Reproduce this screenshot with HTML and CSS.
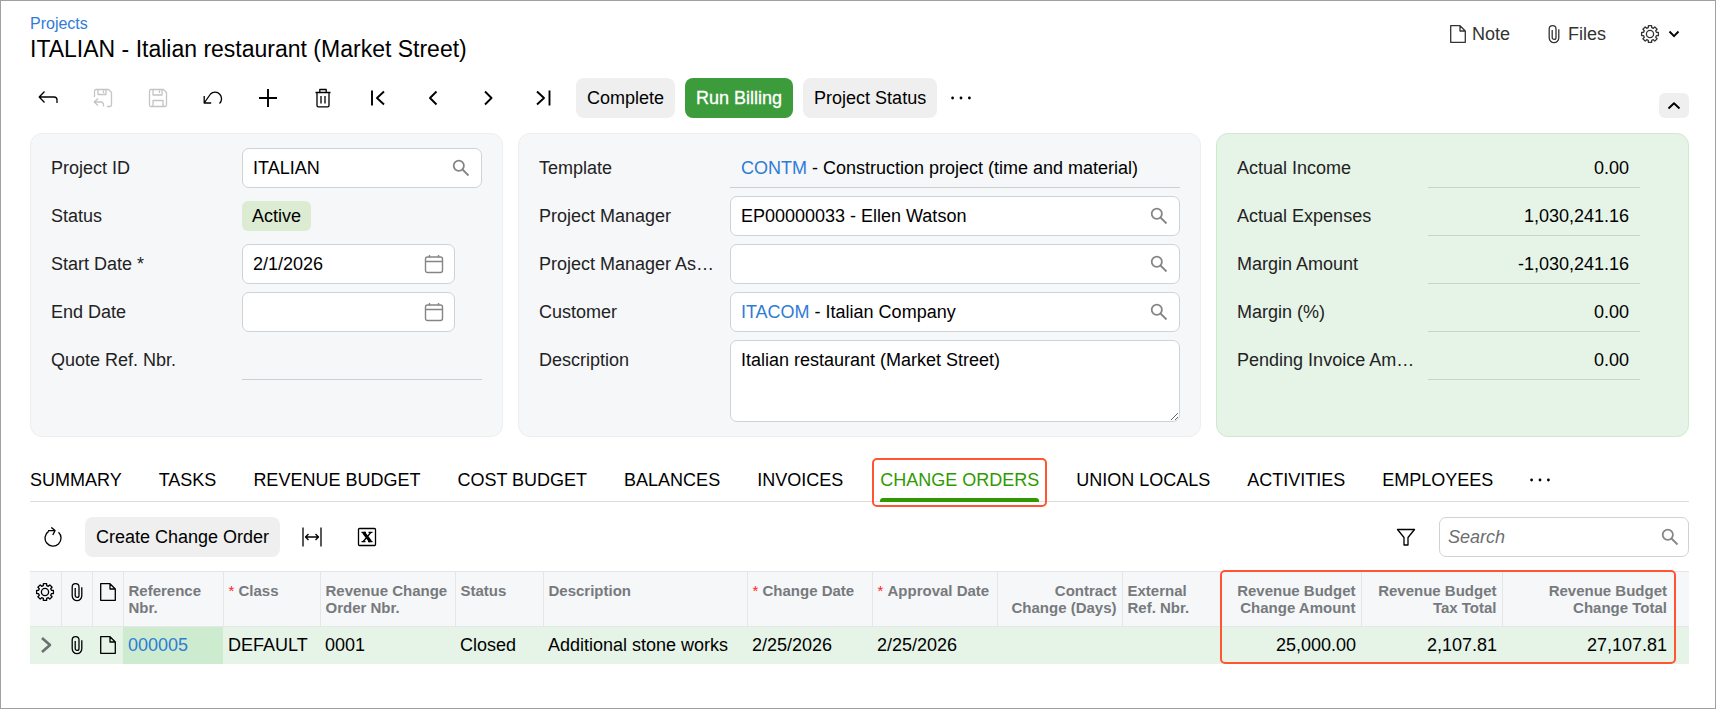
FILE: index.html
```html
<!DOCTYPE html>
<html lang="en">
<head>
    <meta charset="UTF-8">
    <meta name="viewport" content="width=device-width, initial-scale=1.0">
    <title>Projects</title>
    <link rel="stylesheet" href="styles.css">
</head>
<body>
    <svg class="sprite" aria-hidden="true">
        <symbol id="i-gear" viewBox="0 0 20 20">
            <path d="M18.4 8.4V11.6L16.4 11.7 15.7 13.3 17.1 14.8 14.8 17.1 13.3 15.7 11.7 16.4 11.6 18.4H8.4L8.3 16.4 6.7 15.7 5.2 17.1 2.9 14.8 4.3 13.3 3.6 11.7 1.6 11.6V8.4L3.6 8.3 4.3 6.7 2.9 5.2 5.2 2.9 6.7 4.3 8.3 3.6 8.4 1.6H11.6L11.7 3.6 13.3 4.3 14.8 2.9 17.1 5.2 15.7 6.7 16.4 8.3Z"/>
            <circle cx="10" cy="10" r="3.6"/>
        </symbol>
        <symbol id="i-clip" viewBox="0 0 20 20">
            <path d="M14.8 5.2V13.8a4.8 4.8 0 0 1-9.6 0V5a3.4 3.4 0 0 1 6.8 0V13.4a1.9 1.9 0 0 1-3.8 0V6"/>
        </symbol>
        <symbol id="i-note" viewBox="0 0 20 20">
            <path d="M2.7 1.7H12L17.3 7V18.3H2.7ZM12 1.7V7H17.3"/>
        </symbol>
        <symbol id="i-search" viewBox="0 0 20 20">
            <circle cx="7.8" cy="7.8" r="5.1"/>
            <path d="M11.5 11.5L17.5 17.5"/>
        </symbol>
        <symbol id="i-date" viewBox="0 0 20 20">
            <rect x="1.5" y="3" width="17" height="15.5" rx="2"/>
            <path d="M1.5 7.5H18.5M5.5 1V3.5M14.5 1V3.5"/>
        </symbol>
        <symbol id="i-dots" viewBox="0 0 20 20">
            <circle cx="1.6" cy="10" r="1.4"/>
            <circle cx="10" cy="10" r="1.4"/>
            <circle cx="18.4" cy="10" r="1.4"/>
        </symbol>
    </svg>

    <header class="page-header">
        <div>
            <a class="breadcrumb" href="#">Projects</a>
            <h1>ITALIAN - Italian restaurant (Market Street)</h1>
        </div>
        <div class="page-tools">
            <button class="tool" type="button"><svg class="icon"><use href="#i-note"/></svg>Note</button>
            <button class="tool" type="button"><svg class="icon"><use href="#i-clip"/></svg>Files</button>
            <button class="tool settings" type="button" aria-label="Settings">
                <svg class="icon"><use href="#i-gear"/></svg>
                <svg class="icon bold" viewBox="0 0 20 20"><path d="M5.5 7.5L10 12.2 14.5 7.5"/></svg>
            </button>
        </div>
    </header>

    <div class="toolbar">
        <button class="icon-btn" type="button" aria-label="Back">
            <svg class="icon dark" viewBox="0 0 20 20"><path d="M6.5 3.5L1.2 9 6.5 14.5M1.2 9H16a3 3 0 0 1 3 3V15"/></svg>
        </button>
        <button class="icon-btn" type="button" aria-label="Save and close" disabled>
            <svg class="icon" viewBox="0 0 20 20"><path d="M1.5 9V3a1.5 1.5 0 0 1 1.5-1.5H15.5L18.5 4.5V17a1.5 1.5 0 0 1-1.5 1.5H14M5 1.5V6.5H13V1.5M10.5 2.5V5M5 10.5L1.2 14 5 17.5M1.2 14H8a2.5 2.5 0 0 1 2.5 2.5V18.5"/></svg>
        </button>
        <button class="icon-btn" type="button" aria-label="Save" disabled>
            <svg class="icon" viewBox="0 0 20 20"><path d="M3 1.5H15.5L18.5 4.5V17a1.5 1.5 0 0 1-1.5 1.5H3A1.5 1.5 0 0 1 1.5 17V3A1.5 1.5 0 0 1 3 1.5ZM5 1.5V7H14V1.5M11.5 2.5V5M5 18.5V12.5H15V18.5"/></svg>
        </button>
        <button class="icon-btn" type="button" aria-label="Undo">
            <svg class="icon dark" viewBox="0 0 20 20"><path d="M1.2 8V15H8.2M1.2 15L7.5 6A6.3 6.3 0 1 1 16.5 15.5"/></svg>
        </button>
        <button class="icon-btn" type="button" aria-label="Add">
            <svg class="icon bold" viewBox="0 0 20 20"><path d="M10 1V19M1 10H19"/></svg>
        </button>
        <button class="icon-btn" type="button" aria-label="Delete">
            <svg class="icon dark" viewBox="0 0 20 20"><path d="M2.5 4.5H17.5M4 4.5V17.5a1.3 1.3 0 0 0 1.3 1.3H14.7A1.3 1.3 0 0 0 16 17.5V4.5M6.8 4V1.5H13.2V4M8 8V15.5M12 8V15.5"/></svg>
        </button>
        <button class="icon-btn" type="button" aria-label="First">
            <svg class="icon bold" viewBox="0 0 20 20"><path d="M4 2.5V17.5M16 3.5L9 10 16 16.5"/></svg>
        </button>
        <button class="icon-btn" type="button" aria-label="Previous">
            <svg class="icon bold" viewBox="0 0 20 20"><path d="M13.5 3.5L7 10 13.5 16.5"/></svg>
        </button>
        <button class="icon-btn" type="button" aria-label="Next">
            <svg class="icon bold" viewBox="0 0 20 20"><path d="M7 3.5L13.5 10 7 16.5"/></svg>
        </button>
        <button class="icon-btn" type="button" aria-label="Last">
            <svg class="icon bold" viewBox="0 0 20 20"><path d="M4 3.5L11 10 4 16.5M16.5 2.5V17.5"/></svg>
        </button>
        <div class="actions">
            <button class="btn" type="button">Complete</button>
            <button class="btn primary" type="button">Run Billing</button>
            <button class="btn" type="button">Project Status</button>
            <button class="more" type="button" aria-label="More actions"><svg class="icon fill"><use href="#i-dots"/></svg></button>
        </div>
        <button class="collapse" type="button" aria-label="Collapse">
            <svg class="icon bold" viewBox="0 0 20 20"><path d="M4.5 12.5L10 7.2 15.5 12.5"/></svg>
        </button>
    </div>

    <form class="summary">
        <section class="card">
            <label for="projectId">Project ID</label>
            <div class="field">
                <input type="text" id="projectId" value="ITALIAN">
                <svg class="icon muted"><use href="#i-search"/></svg>
            </div>
            <span class="label">Status</span>
            <span class="status">Active</span>
            <label for="startDate">Start Date *</label>
            <div class="field date">
                <input type="text" id="startDate" value="2/1/2026">
                <svg class="icon muted thin"><use href="#i-date"/></svg>
            </div>
            <label for="endDate">End Date</label>
            <div class="field date">
                <input type="text" id="endDate">
                <svg class="icon muted thin"><use href="#i-date"/></svg>
            </div>
            <span class="label">Quote Ref. Nbr.</span>
            <span class="value"></span>
        </section>

        <section class="card">
            <span class="label">Template</span>
            <span class="value"><a href="#">CONTM</a> - Construction project (time and material)</span>
            <label for="manager">Project Manager</label>
            <div class="field">
                <input type="text" id="manager" value="EP00000033 - Ellen Watson">
                <svg class="icon muted"><use href="#i-search"/></svg>
            </div>
            <label for="assistant" title="Project Manager Assistant">Project Manager As…</label>
            <div class="field">
                <input type="text" id="assistant">
                <svg class="icon muted"><use href="#i-search"/></svg>
            </div>
            <label for="customer">Customer</label>
            <div class="field">
                <a href="#">ITACOM</a>
                <input type="text" id="customer" value="- Italian Company">
                <svg class="icon muted"><use href="#i-search"/></svg>
            </div>
            <label for="description">Description</label>
            <textarea id="description">Italian restaurant (Market Street)</textarea>
        </section>

        <section class="card totals">
            <span class="label">Actual Income</span>
            <span class="value">0.00</span>
            <span class="label">Actual Expenses</span>
            <span class="value">1,030,241.16</span>
            <span class="label">Margin Amount</span>
            <span class="value">-1,030,241.16</span>
            <span class="label">Margin (%)</span>
            <span class="value">0.00</span>
            <span class="label" title="Pending Invoice Amount">Pending Invoice Am…</span>
            <span class="value">0.00</span>
        </section>
    </form>

    <nav class="tabs">
        <a href="#">SUMMARY</a>
        <a href="#">TASKS</a>
        <a href="#">REVENUE BUDGET</a>
        <a href="#">COST BUDGET</a>
        <a href="#">BALANCES</a>
        <a href="#">INVOICES</a>
        <a class="active" href="#">CHANGE ORDERS</a>
        <a href="#">UNION LOCALS</a>
        <a href="#">ACTIVITIES</a>
        <a href="#">EMPLOYEES</a>
        <button class="more" type="button" aria-label="More tabs"><svg class="icon fill"><use href="#i-dots"/></svg></button>
    </nav>

    <div class="grid-toolbar">
        <button class="icon-btn" type="button" aria-label="Refresh">
            <svg class="icon dark" viewBox="0 0 20 20"><path d="M5.6 4.4A8 8 0 1 0 15.5 5.2M5 3.6H12M8.3 .4L12 3.6 9.8 8"/></svg>
        </button>
        <button class="btn" type="button">Create Change Order</button>
        <button class="icon-btn" type="button" aria-label="Fit columns">
            <svg class="icon dark" viewBox="0 0 20 20"><path d="M1 .5V19.5M19 .5V19.5M3.5 10H16.5M6.5 7L3.5 10 6.5 13M13.5 7L16.5 10 13.5 13"/></svg>
        </button>
        <button class="icon-btn" type="button" aria-label="Export to Excel">
            <svg class="icon dark" viewBox="0 0 20 20"><rect x="1.5" y="1.5" width="17" height="17" rx="1"/><path d="M6.5 5.5L13.5 14.5" stroke-width="3"/><path d="M13.8 5.5L6.2 14.5M4.5 5.3H9M11.5 5.3H15.5M4.5 14.7H8.5M11 14.7H15.5"/></svg>
        </button>
        <button class="icon-btn filter" type="button" aria-label="Filter">
            <svg class="icon dark" viewBox="0 0 20 20"><path d="M1.5 2.5H18.5L12 10.5V18H8V10.5Z"/></svg>
        </button>
        <div class="field search">
            <input type="search" placeholder="Search" aria-label="Search">
            <svg class="icon muted"><use href="#i-search"/></svg>
        </div>
    </div>

    <div class="grid">
        <table>
            <colgroup>
                <col class="w-icon"><col class="w-icon"><col class="w-icon">
                <col class="w-ref"><col class="w-class"><col class="w-rev"><col class="w-status"><col class="w-desc">
                <col class="w-date"><col class="w-date"><col class="w-date"><col class="w-ext">
                <col class="w-amount"><col class="w-amount"><col class="w-total"><col>
            </colgroup>
            <thead>
                <tr>
                    <th class="center"><svg class="icon dark"><use href="#i-gear"/></svg></th>
                    <th class="center"><svg class="icon dark"><use href="#i-clip"/></svg></th>
                    <th class="center"><svg class="icon dark"><use href="#i-note"/></svg></th>
                    <th>Reference Nbr.</th>
                    <th class="required">Class</th>
                    <th>Revenue Change Order Nbr.</th>
                    <th>Status</th>
                    <th>Description</th>
                    <th class="required">Change Date</th>
                    <th class="required">Approval Date</th>
                    <th class="num">Contract Change (Days)</th>
                    <th>External<br>Ref. Nbr.</th>
                    <th class="num">Revenue Budget Change Amount</th>
                    <th class="num">Revenue Budget<br>Tax Total</th>
                    <th class="num">Revenue Budget<br>Change Total</th>
                    <th></th>
                </tr>
            </thead>
            <tbody>
                <tr>
                    <td class="center"><svg class="icon arrow" viewBox="0 0 20 20"><path d="M6 3L14 10 6 17"/></svg></td>
                    <td class="center"><svg class="icon dark"><use href="#i-clip"/></svg></td>
                    <td class="center"><svg class="icon dark"><use href="#i-note"/></svg></td>
                    <td class="selected"><a href="#">000005</a></td>
                    <td>DEFAULT</td>
                    <td>0001</td>
                    <td>Closed</td>
                    <td>Additional stone works</td>
                    <td>2/25/2026</td>
                    <td>2/25/2026</td>
                    <td></td>
                    <td></td>
                    <td class="num">25,000.00</td>
                    <td class="num">2,107.81</td>
                    <td class="num">27,107.81</td>
                    <td></td>
                </tr>
            </tbody>
        </table>
        <div class="highlight"></div>
    </div>
</body>
</html>
```
FILE: styles.css
```css
* {
    box-sizing: border-box;
}
html {
    height: 100%;
}
body {
    margin: 0;
    min-height: 100%;
    padding: 13px 26px 40px 29px;
    border: 1px solid #a0a0a0;
    background-color: #fff;
    color: #000;
    font-family: "Liberation Sans", Arial, sans-serif;
    font-size: 18px;
    line-height: 20px;
}
a {
    color: #2f7cd6;
    text-decoration: none;
}
button, input, textarea {
    font: inherit;
    color: inherit;
}
button {
    padding: 0;
    border: none;
    background: none;
    cursor: pointer;
}

/* icons */
.sprite {
    position: absolute;
    width: 0;
    height: 0;
}
.icon {
    display: block;
    flex: none;
    width: 20px;
    height: 20px;
    fill: none;
    stroke: #333;
    stroke-width: 1.3;
    stroke-linejoin: round;
}
.icon.dark {
    stroke: #000;
}
.icon.bold {
    stroke: #000;
    stroke-width: 1.9;
}
.icon.muted {
    stroke: #858585;
    stroke-width: 1.8;
}
.icon.thin {
    stroke-width: 1.4;
}
.icon.fill {
    fill: #000;
    stroke: none;
}
.icon.arrow {
    stroke: #6b6f72;
    stroke-width: 2.6;
}

/* header */
.page-header {
    display: flex;
    justify-content: space-between;
}
.breadcrumb {
    display: block;
    font-size: 16px;
    line-height: 20px;
}
h1 {
    margin: 0;
    font-size: 23px;
    font-weight: normal;
    line-height: 30px;
}
.page-tools {
    display: flex;
    align-items: flex-start;
    gap: 34px;
    padding: 10px 5px 0 0;
}
.tool {
    display: flex;
    align-items: center;
    gap: 4px;
    color: #333;
}

/* toolbar */
.toolbar {
    display: flex;
    align-items: center;
    margin-top: 14px;
    padding-left: 8px;
}
.icon-btn {
    display: flex;
    justify-content: center;
    width: 20px;
    margin-right: 35px;
}
.icon-btn:disabled .icon {
    stroke: #c4c4c4;
}
.actions {
    display: flex;
    align-items: center;
    gap: 10px;
    margin-left: -12px;
}
.btn {
    height: 40px;
    padding: 0 11px;
    border-radius: 8px;
    background-color: #efefef;
    white-space: nowrap;
}
.btn.primary {
    background-color: #3c9c3b;
    color: #fff;
    -webkit-text-stroke: 0.3px #fff;
}
.actions .more {
    margin-left: 4px;
}
.collapse {
    align-self: flex-end;
    width: 30px;
    height: 25px;
    margin-left: auto;
    padding: 0 5px;
    border-radius: 6px;
    background-color: #efefef;
}

/* summary cards */
.summary {
    display: grid;
    grid-template-columns: minmax(0, 9fr) minmax(0, 13fr) minmax(0, 9fr);
    gap: 15px;
    margin-top: 15px;
}
.card {
    display: grid;
    grid-template-columns: 179px minmax(0, 1fr);
    grid-auto-rows: minmax(40px, auto);
    align-content: start;
    gap: 8px 12px;
    padding: 14px 20px;
    border: 1px solid #eceef0;
    border-radius: 12px;
    background-color: #f5f7f9;
}
.card label, .card .label {
    color: #222;
    line-height: 40px;
    white-space: nowrap;
}
.card.totals {
    padding-right: 48px;
    border-color: #cdeacf;
    background-color: #e5f4e7;
}
.field {
    display: flex;
    align-items: center;
    height: 40px;
    padding: 0 10px;
    border: 1px solid #d0d3d6;
    border-radius: 7px;
    background-color: #fff;
}
.field input {
    flex: 1;
    min-width: 0;
    padding: 0;
    border: none;
    outline: none;
    background: none;
}
.field a + input {
    margin-left: 5px;
}
.field.date {
    margin-right: 27px;
}
.status {
    align-self: center;
    justify-self: start;
    padding: 5px 10px;
    border-radius: 6px;
    background-color: #dcecd2;
}
.value {
    height: 40px;
    padding: 0 11px;
    border-bottom: 1px solid #ccd0d4;
    line-height: 40px;
    white-space: nowrap;
}
.totals .value {
    border-color: #c5d3c8;
    text-align: right;
}
textarea {
    display: block;
    width: 100%;
    height: 82px;
    padding: 9px 10px;
    border: 1px solid #d0d3d6;
    border-radius: 7px;
    background-color: #fff;
    resize: vertical;
}

/* tabs */
.tabs {
    display: flex;
    gap: 37px;
    margin-top: 22px;
    border-bottom: 1px solid #dedede;
}
.tabs a {
    position: relative;
    padding: 11px 0;
    color: #000;
    white-space: nowrap;
}
.tabs a.active {
    color: #2f9a00;
}
.tabs a.active::after {
    content: "";
    position: absolute;
    right: 0;
    bottom: -1px;
    left: 0;
    height: 4px;
    border-radius: 3px 3px 0 0;
    background-color: #2f9a00;
}
.tabs a.active::before {
    content: "";
    position: absolute;
    inset: -1px -8px -6px;
    border: 2px solid #ff5533;
    border-radius: 5px;
}
.tabs .more {
    align-self: center;
}

/* grid */
.grid-toolbar {
    display: flex;
    align-items: center;
    margin: 15px 0 14px;
    padding-left: 13px;
}
.grid-toolbar .btn {
    margin: 0 22px 0 -13px;
}
.grid-toolbar .filter {
    margin-right: 23px;
    margin-left: auto;
}
.search {
    width: 250px;
    padding: 0 8px;
}
.search input::placeholder {
    color: #6e6e6e;
    font-style: italic;
}
.grid {
    position: relative;
}
table {
    width: 100%;
    border-collapse: collapse;
    table-layout: fixed;
}
.w-icon { width: 31px; }
.w-ref { width: 100px; }
.w-class { width: 97px; }
.w-rev { width: 135px; }
.w-status { width: 88px; }
.w-desc { width: 204px; }
.w-date { width: 125px; }
.w-ext { width: 98px; }
.w-amount { width: 141px; }
.w-total { width: 170px; }
th {
    height: 55px;
    padding: 10px 5px 8px;
    border: 1px solid #e4e6e8;
    border-width: 1px 0 1px 1px;
    background-color: #f5f7f9;
    color: #777a7d;
    font-size: 15px;
    line-height: 17px;
    text-align: left;
    vertical-align: top;
}
th:first-child, th:last-child {
    border-left: none;
}
th.required::before {
    content: "* ";
    color: #f22;
    font-weight: normal;
}
td {
    height: 37px;
    padding: 0 5px;
    background-color: #e5f4e7;
    white-space: nowrap;
}
td.selected {
    background-color: #cdebcf;
}
th.num, td.num {
    text-align: right;
}
th.center, td.center {
    padding-right: 0;
    padding-left: 0;
}
.center .icon {
    margin: 0 auto;
}
.highlight {
    position: absolute;
    top: -1px;
    right: 13px;
    bottom: 0;
    width: 456px;
    border: 2px solid #ff5533;
    border-radius: 5px;
    pointer-events: none;
}
```
